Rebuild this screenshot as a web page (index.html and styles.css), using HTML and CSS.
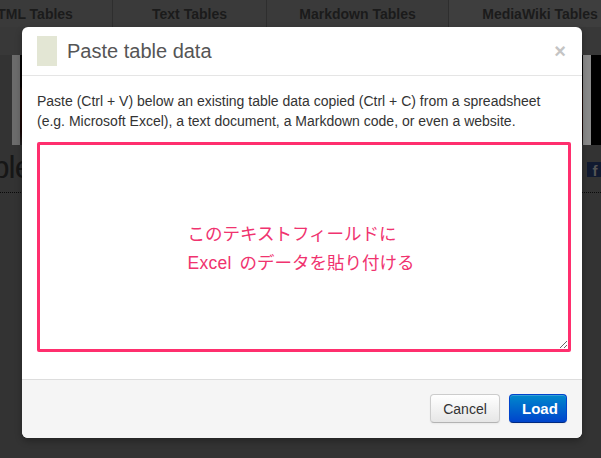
FILE: index.html
```html
<!DOCTYPE html>
<html>
<head>
    <meta charset="UTF-8">
    <title>Paste table data</title>
    <link rel="stylesheet" href="styles.css">
</head>
<body>
    <!-- 뒤쪽 페이지 (어둡게 가려진 부분) -->
    <div class="page">
        <div class="nav">
            <div class="tab tab-first">HTML Tables</div>
            <div class="tab tab-text">Text Tables</div>
            <div class="tab tab-md">Markdown Tables</div>
            <div class="tab tab-wiki">MediaWiki Tables</div>
        </div>
        <div class="subbar"></div>
        <div class="banner">
            <div class="banner-strip"></div>
            <div class="banner-fill"></div>
            <div class="banner-strip right"></div>
            <div class="banner-dark"></div>
        </div>
        <div class="heading-row">
            <span class="heading">Table</span>
            <span class="fb">f</span>
        </div>
        <div class="dots"></div>
    </div>

    <!-- 모달 대화상자 -->
    <div class="modal">
        <div class="modal-header">
            <div class="swatch"></div>
            <h3>Paste table data</h3>
            <span class="close">&times;</span>
        </div>
        <div class="modal-body">
            <p>Paste (Ctrl + V) below an existing table data copied (Ctrl + C) from a spreadsheet (e.g. Microsoft Excel), a text document, a Markdown code, or even a website.</p>
            <div class="paste-box">
                <textarea class="paste-area"></textarea>
                <div class="paste-note">
                    <div>このテキストフィールドに<br><span class="latin">Excel</span> のデータを貼り付ける</div>
                </div>
            </div>
        </div>
        <div class="modal-footer">
            <button class="btn">Cancel</button>
            <button class="btn btn-primary">Load</button>
        </div>
    </div>
</body>
</html>
```

FILE: styles.css
```css
/* 전체 페이지 */
body {
    margin: 0;
    background-color: #333;
    font-family: "Liberation Sans", Arial, sans-serif;
    overflow: hidden;
}

.page {
    height: 458px;
}

/* 상단 탭 메뉴 */
.nav {
    display: flex;
    height: 27px;
    margin-left: -52px;
    background-color: #3a3a3a;
}

.tab {
    flex: none;
    text-align: center;
    font-size: 14px;
    font-weight: bold;
    line-height: 28px;
    color: #1b1b1b;
    border-right: 1px solid #2e2e2e;
}

.tab-first { width: 164px; }
.tab-text { width: 153px; }
.tab-md { width: 181px; }
.tab-wiki { width: 182px; background-color: #3e3e3e; }

.subbar {
    height: 28px;
    background-color: #383838;
}

/* 배너 이미지 부분 */
.banner {
    display: flex;
    height: 90px;
}

.banner-strip {
    width: 8px;
    margin-left: 12px;
    background-color: #6c6c6c;
}

.banner-strip.right {
    margin-left: 0;
    background-color: #8a8a8a;
}

.banner-fill {
    width: 563px;
    background: linear-gradient(#050505 0%, #060202 35%, #1c0a05 40%, #180505 85%, #222 100%);
}

.banner-dark {
    flex: 1;
    background-color: #000;
}

.heading-row {
    display: flex;
    justify-content: space-between;
    align-items: center;
    height: 44px;
}

.heading {
    margin-left: -40px;
    font-size: 32px;
    letter-spacing: -1px;
    color: #161616;
}

.fb {
    width: 16px;
    height: 15px;
    margin-right: -2px;
    margin-top: 4px;
    background-color: #111a30;
    color: #555;
    font-weight: bold;
    font-size: 15px;
    line-height: 17px;
    text-align: center;
}

.dots {
    border-top: 1px dotted #0a0a0a;
    margin-top: 3px;
}

/* 모달 창 */
.modal {
    position: absolute;
    left: 22px;
    top: 27px;
    width: 560px;
    height: 411px;
    display: flex;
    flex-direction: column;
    background-color: #fff;
    border-radius: 6px;
    box-shadow: 0 3px 7px rgba(0, 0, 0, 0.3);
}

.modal-header {
    display: flex;
    align-items: center;
    height: 48px;
    padding: 0 15px;
    border-bottom: 1px solid #e5e5e5;
}

.swatch {
    width: 20px;
    height: 30px;
    background-color: #e3e6d4;
}

.modal-header h3 {
    flex: 1;
    margin: 0 0 0 10px;
    font-size: 20px;
    font-weight: normal;
    color: #555;
}

.close {
    font-size: 20px;
    font-weight: bold;
    color: #c4c4c4;
    margin-right: 1px;
}

.modal-body {
    flex: 1;
    padding: 15px 15px 0;
}

.modal-body p {
    margin: 0 0 11px;
    font-size: 14px;
    line-height: 20px;
    color: #333;
}

.paste-box {
    position: relative;
}

.paste-area {
    display: block;
    box-sizing: border-box;
    width: 534px;
    height: 210px;
    margin: 0;
    border: 3px solid #ff2f6e;
    border-radius: 2px;
    background-color: #fff;
}

/* 안내 문구 (텍스트 영역 위에 표시) */
.paste-note {
    position: absolute;
    top: 0;
    left: 0;
    right: 0;
    bottom: 0;
    display: flex;
    justify-content: center;
    align-items: center;
    pointer-events: none;
}

.paste-note div {
    margin: 4px 0 0 -2px;
    font-family: "Liberation Sans", "Noto Sans CJK JP", sans-serif;
    font-size: 17.5px;
    line-height: 29px;
    color: #f0336f;
}

.paste-note .latin {
    letter-spacing: 0.3px;
    margin-right: 3px;
}

/* 하단 버튼 영역 */
.modal-footer {
    display: flex;
    justify-content: flex-end;
    gap: 9px;
    height: 59px;
    box-sizing: border-box;
    padding: 14px 15px 0;
    background-color: #f5f5f5;
    border-top: 1px solid #ddd;
    border-radius: 0 0 6px 6px;
}

.btn {
    height: 29px;
    padding: 0 12px;
    font-family: "Liberation Sans", Arial, sans-serif;
    font-size: 14px;
    color: #333;
    background: linear-gradient(#fff, #e6e6e6);
    border: 1px solid #cccccc;
    border-bottom-color: #b3b3b3;
    border-radius: 4px;
    box-shadow: inset 0 1px 0 rgba(255, 255, 255, 0.2), 0 1px 2px rgba(0, 0, 0, 0.05);
    cursor: pointer;
}

.btn:first-child {
    width: 70px;
}

.btn-primary {
    width: 58px;
    font-weight: bold;
    font-size: 15px;
    color: #fff;
    background: linear-gradient(#0088cc, #0044cc);
    border-color: #0044cc #0044cc #002a80;
}
```
